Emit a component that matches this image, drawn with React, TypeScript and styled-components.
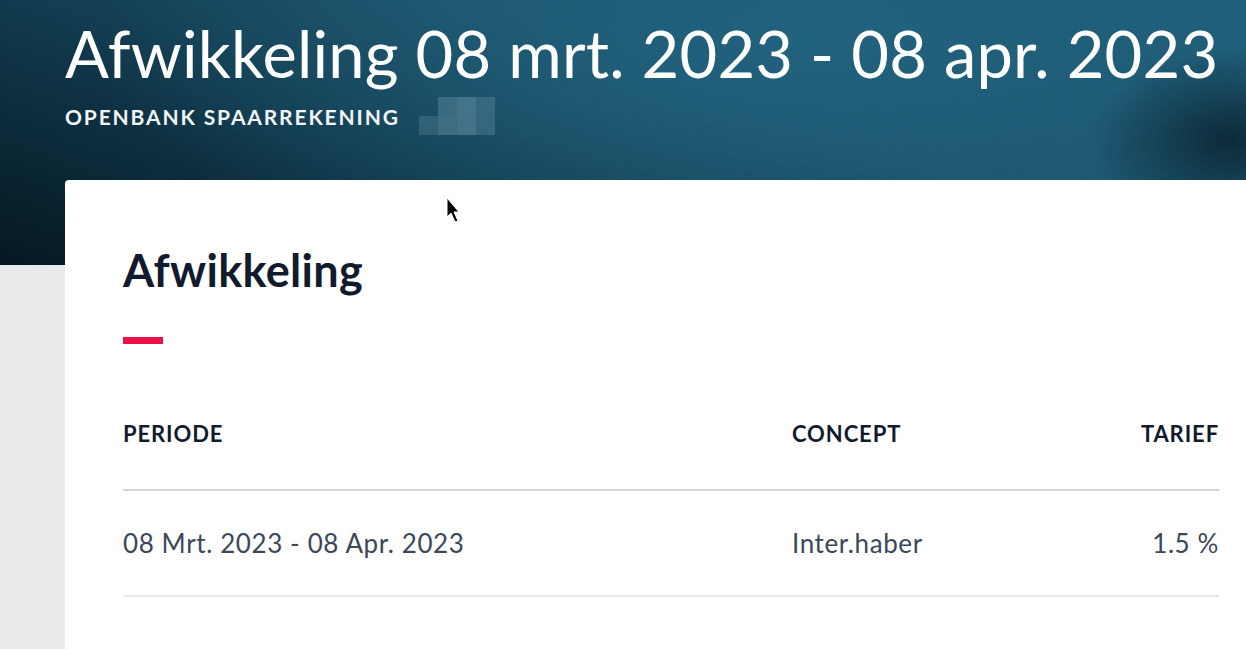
import React from "react";
import styled, { createGlobalStyle } from "styled-components";

const GlobalStyle = createGlobalStyle`
  html, body { margin: 0; padding: 0; }
  body {
    background: #e8eaeb;
    font-family: Lato, "Noto Sans", sans-serif;
    overflow: hidden;
  }
`;

const Page = styled.div`
  position: relative;
  width: 1246px;
  height: 649px;
  overflow: hidden;
  background: #e8eaeb;
`;

const Header = styled.header`
  height: 265px;
  box-sizing: border-box;
  padding: 13px 0 0 65px;
  background:
    radial-gradient(ellipse 140px 90px at 1230px 140px, rgba(8, 30, 42, 0.8), rgba(8, 30, 42, 0) 100%),
    radial-gradient(ellipse 700px 260px at 800px 40px, rgba(34, 100, 128, 0.9), rgba(34, 100, 128, 0) 100%),
    linear-gradient(200deg, #1f5d77 0%, #1b5068 40%, #0f3446 70%, #051821 100%);
  color: #ffffff;
`;

const Title = styled.h1`
  margin: 0;
  font-size: 65px;
  font-weight: 400;
  letter-spacing: 0.2px;
  line-height: 80px;
  white-space: nowrap;
`;

const SubRow = styled.div`
  display: flex;
  align-items: center;
  gap: 19px;
  margin-top: 4px;
`;

const Subtitle = styled.span`
  font-size: 21px;
  font-weight: 700;
  letter-spacing: 1.85px;
  color: #f2f5f7;
`;

const Masked = styled.div`
  display: grid;
  grid-template-columns: repeat(4, 19px);
  grid-template-rows: repeat(2, 19px);
`;

const Pixel = styled.span<{ $shade: number }>`
  background: rgba(120, 160, 180, ${(p) => p.$shade});
`;

const Card = styled.main`
  margin: -85px 0 0 65px;
  height: 520px;
  background: #ffffff;
  border-radius: 4px 0 0 0;
  box-sizing: border-box;
  padding: 62px 27px 0 58px;
`;

const Heading = styled.h2`
  margin: 0;
  font-size: 45px;
  font-weight: 700;
  letter-spacing: 0.3px;
  line-height: 56px;
  color: #111b2d;
`;

const Accent = styled.div`
  width: 40px;
  height: 7px;
  margin-top: 39px;
  background: #ec1249;
`;

const Table = styled.div`
  margin-top: 77px;
  display: grid;
  grid-template-columns: 669px 1fr auto;
`;

const HeadCell = styled.div<{ $right?: boolean }>`
  font-size: 22px;
  font-weight: 700;
  letter-spacing: 0.9px;
  color: #111b2d;
  text-align: ${(p) => (p.$right ? "right" : "left")};
  padding-bottom: 42px;
  border-bottom: 2px solid #d3d5d7;
  line-height: 26px;
`;

const Cell = styled.div<{ $right?: boolean }>`
  font-size: 26px;
  font-weight: 400;
  letter-spacing: 0.6px;
  color: #3c4757;
  text-align: ${(p) => (p.$right ? "right" : "left")};
  padding: 37px 0 37px;
  line-height: 30px;
  border-bottom: 2px solid #e6e8ea;
`;

const Cursor = styled.svg`
  position: absolute;
  left: 446px;
  top: 197px;
`;

const masks = [0, 0.35, 0.45, 0.3, 0.25, 0.4, 0.45, 0.3];

export default function App() {
  return (
    <Page>
      <GlobalStyle />
      <Header>
        <Title>Afwikkeling 08 mrt. 2023 - 08 apr. 2023</Title>
        <SubRow>
          <Subtitle>OPENBANK SPAARREKENING</Subtitle>
          <Masked>
            {masks.map((s, i) => (
              <Pixel key={i} $shade={s} />
            ))}
          </Masked>
        </SubRow>
      </Header>
      <Card>
        <Heading>Afwikkeling</Heading>
        <Accent />
        <Table>
          <HeadCell>PERIODE</HeadCell>
          <HeadCell>CONCEPT</HeadCell>
          <HeadCell $right>TARIEF</HeadCell>
          <Cell>08 Mrt. 2023 - 08 Apr. 2023</Cell>
          <Cell>Inter.haber</Cell>
          <Cell $right>1.5 %</Cell>
        </Table>
      </Card>
      <Cursor width="14" height="36" viewBox="0 0 14 36">
        <path d="M1 1 L1 20 L5 16 L9 25 L12 24 L8 15 L13 15 Z" fill="#000" stroke="#fff" strokeWidth="1" />
      </Cursor>
    </Page>
  );
}
